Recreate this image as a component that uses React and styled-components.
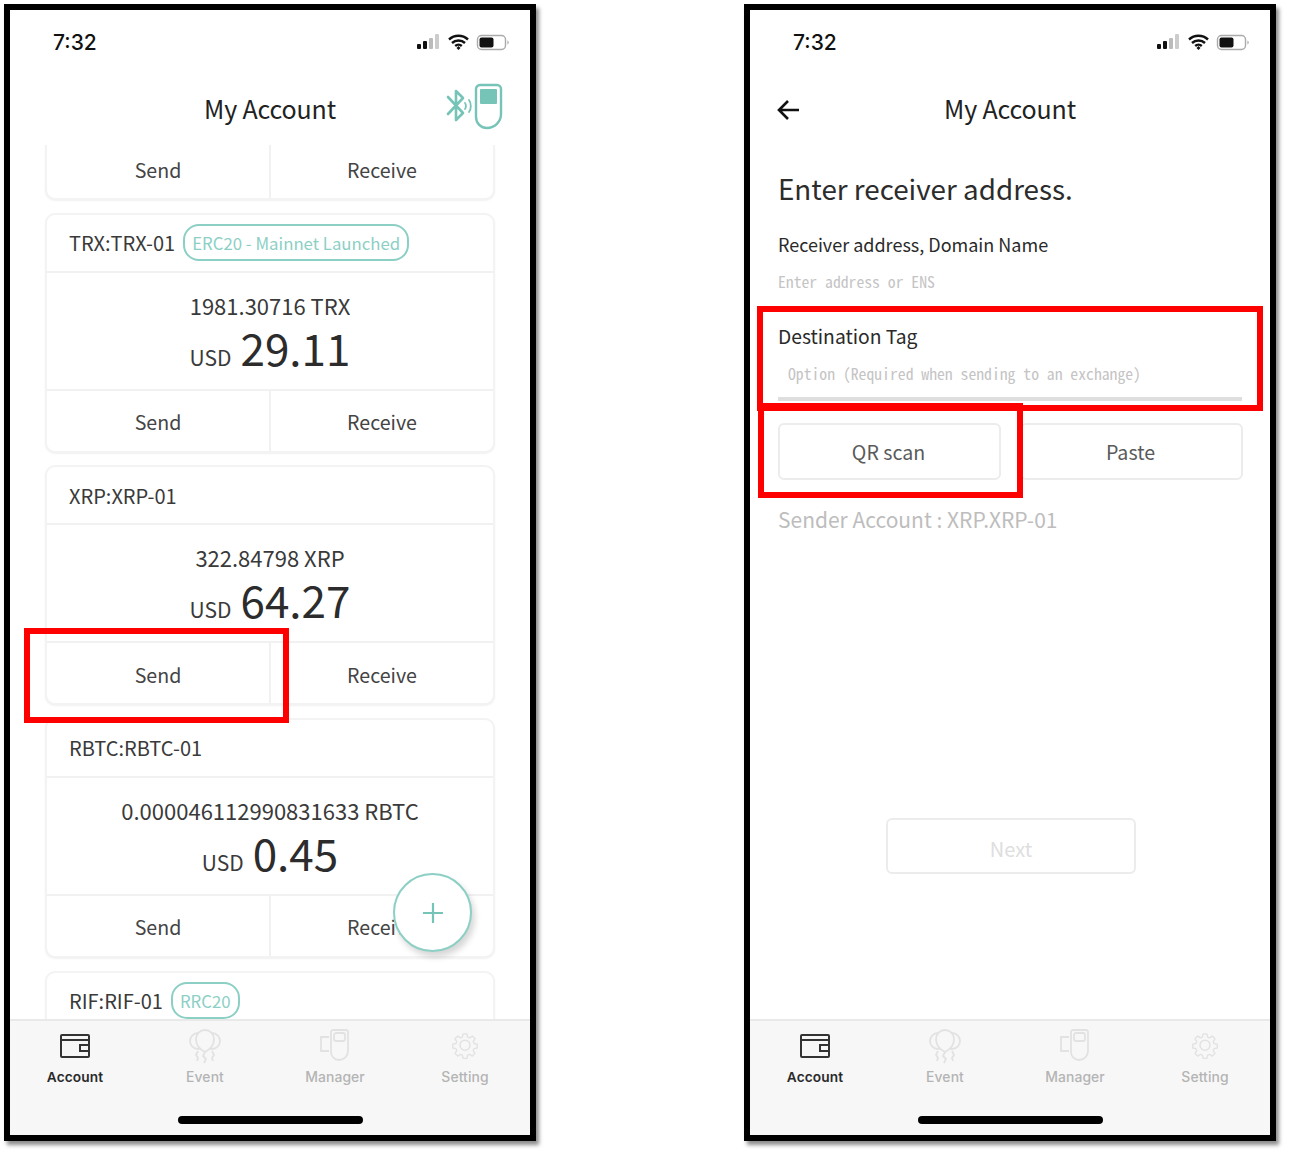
import styled, { createGlobalStyle } from "styled-components";

const TEAL = "#76c4b8";
const KR = `"Noto Sans CJK KR", "Noto Sans", sans-serif`;

const GlobalStyle = createGlobalStyle`
  html, body {
    margin: 0;
    padding: 0;
    background: #fff;
  }
  * { box-sizing: border-box; }
`;

const Page = styled.div`
  width: 1289px;
  height: 1154px;
  padding: 4px;
  display: flex;
  gap: 208px;
  background: #fff;
  font-family: ${KR};
  color: #333;
`;

const Phone = styled.section`
  position: relative;
  width: 532px;
  height: 1137px;
  border: 6px solid #000;
  background: #fff;
  box-shadow: 3px 4px 4px rgba(0, 0, 0, 0.45);
  display: flex;
  flex-direction: column;
  overflow: visible;
`;

const StatusBar = styled.div`
  height: 61px;
  flex: none;
  padding: 3px 19px 0 43px;
  display: flex;
  align-items: center;
  justify-content: space-between;
`;

const Clock = styled.span`
  font-family: Inter, sans-serif;
  font-size: 21px;
  font-weight: 500;
  color: #111;
`;

const Header = styled.header`
  position: relative;
  height: 74px;
  flex: none;
  display: flex;
  align-items: center;
  justify-content: center;
`;

const HeaderTitle = styled.h1`
  margin: 0;
  font-size: 25px;
  font-weight: 400;
  color: #222;
  letter-spacing: -0.15px;
`;

const DeviceSlot = styled.div`
  position: absolute;
  right: 26px;
  top: 12px;
  line-height: 0;
`;

const BackSlot = styled.div`
  position: absolute;
  left: 26px;
  top: 28px;
  line-height: 0;
`;

const AccountList = styled.div`
  flex: 1;
  min-height: 0;
  overflow: hidden;
  padding: 0 35px 0;
  display: flex;
  flex-direction: column;
  gap: 12.67px;
`;

const Card = styled.article`
  flex: none;
  height: ${(p) => (p.$clipped ? "63px" : "240px")};
  margin-top: ${(p) => (p.$clipped ? "-8px" : "0")};
  border: 2px solid #f3f3f3;
  border-radius: 10px;
  background: #fff;
  box-shadow: 0 1px 2px rgba(0, 0, 0, 0.06);
  display: flex;
  flex-direction: column;
`;

const CardHead = styled.div`
  height: 58px;
  flex: none;
  padding: 0 22px;
  display: flex;
  align-items: center;
  gap: 8px;
  border-bottom: 2px solid #f1f1f1;
  font-size: 20px;
  color: #3a3a3a;
`;

const Badge = styled.span`
  height: 37px;
  padding: 0 7px;
  display: flex;
  align-items: center;
  border: 2px solid #8ccfc5;
  border-radius: 16px;
  font-size: 16.8px;
  color: #8ccfc5;
`;

const CardBody = styled.div`
  height: 118px;
  flex: none;
  display: flex;
  flex-direction: column;
  align-items: center;
  padding-top: 17px;
  border-bottom: 2px solid #f1f1f1;
`;

const Amount = styled.div`
  font-size: 22px;
  line-height: 30px;
  color: #3a3a3a;
`;

const Fiat = styled.div`
  display: flex;
  align-items: baseline;
  gap: 9px;
  height: 54px;
  font-size: 21px;
  color: #3a3a3a;
  strong {
    font-size: 44px;
    line-height: 54px;
    font-weight: 400;
    color: #2c2c2c;
  }
`;

const Actions = styled.div`
  flex: 1;
  min-height: 0;
  display: flex;
`;

const Action = styled.div`
  flex: 1;
  display: flex;
  align-items: center;
  justify-content: center;
  padding-top: 2px;
  font-size: 19.6px;
  color: #444;
  & + & {
    border-left: 2px solid #f1f1f1;
  }
`;

const Fab = styled.button`
  position: absolute;
  left: 383px;
  top: 863px;
  width: 79px;
  height: 79px;
  padding: 0;
  border: 2px solid #8ccfc5;
  border-radius: 50%;
  background: #fff;
  box-shadow: 3px 5px 6px rgba(0, 0, 0, 0.16);
  display: flex;
  align-items: center;
  justify-content: center;
`;

const TabBar = styled.nav`
  height: 116px;
  flex: none;
  position: relative;
  background: #f7f7f7;
  border-top: 2px solid #e9e9e9;
  display: grid;
  grid-template-columns: repeat(4, 1fr);
  align-items: start;
  padding-top: 7px;
`;

const TabItem = styled.div`
  display: flex;
  flex-direction: column;
  align-items: center;
  gap: 5px;
  font-family: Inter, sans-serif;
  font-size: ${(p) => (p.$active ? "13.7px" : "13.9px")};
  font-weight: ${(p) => (p.$active ? 600 : 500)};
  letter-spacing: 0.1px;
  color: ${(p) => (p.$active ? "#2a2a2a" : "#b4b4b4")};
  svg {
    display: block;
    height: 36px;
  }
`;

const HomeBar = styled.div`
  position: absolute;
  left: 168px;
  bottom: 11px;
  width: 185px;
  height: 8px;
  border-radius: 4px;
  background: #000;
`;

const Form = styled.div`
  flex: 1;
  min-height: 0;
  padding: 23px 27px 0 28px;
  display: flex;
  flex-direction: column;
`;

const FormTitle = styled.h2`
  margin: 0;
  font-size: 27.8px;
  line-height: 40px;
  font-weight: 400;
  color: #2c2c2c;
`;

const FieldLabel = styled.label`
  display: block;
  margin-top: ${(p) => p.$top}px;
  font-size: ${(p) => p.$size}px;
  line-height: 26px;
  font-weight: 400;
  color: #2a2a2a;
`;

const Placeholder = styled.div`
  margin-top: ${(p) => p.$top}px;
  padding-left: ${(p) => p.$inset}px;
  font-family: "Noto Sans Mono CJK KR", "DejaVu Sans Mono", monospace;
  font-size: 15.7px;
  line-height: 20px;
  color: #c4c4c4;
`;

const Underline = styled.div`
  height: 4px;
  margin-top: 13px;
  margin-right: 1px;
  background: #dedede;
`;

const ButtonRow = styled.div`
  display: flex;
  gap: 19px;
  margin-top: 22px;
`;

const GhostButton = styled.button`
  flex: 1;
  height: 57px;
  padding: 0 2px 0 0;
  border: 2px solid #ececec;
  border-radius: 6px;
  background: #fff;
  font-family: ${KR};
  font-size: 19.6px;
  color: #5a5a5a;
`;

const SenderLine = styled.div`
  margin-top: 24px;
  font-size: 21px;
  line-height: 30px;
  color: #bdbdbd;
`;

const NextButton = styled.button`
  align-self: flex-start;
  width: 250px;
  height: 56px;
  margin: 284px 0 0 108px;
  padding: 4px 0 0;
  border: 2px solid #ececec;
  border-radius: 6px;
  background: #fff;
  font-family: ${KR};
  font-size: 20px;
  color: #dedede;
`;

const RedBox = styled.div`
  position: absolute;
  left: ${(p) => p.$x}px;
  top: ${(p) => p.$y}px;
  width: ${(p) => p.$w}px;
  height: ${(p) => p.$h}px;
  border: 6px solid #f00;
  pointer-events: none;
`;

const SignalIcons = () => (
  <svg width="94" height="20" viewBox="0 0 94 20">
    <rect x="0" y="12" width="4" height="5" rx="1" fill="#111" />
    <rect x="6" y="9" width="4" height="8" rx="1" fill="#111" />
    <rect x="12" y="6" width="4" height="11" rx="1" fill="#bbb" />
    <rect x="18" y="2" width="4" height="15" rx="1" fill="#ccc" />
    <path d="M32 7.5a14 14 0 0 1 19 0M35 11a9.5 9.5 0 0 1 13 0M38.2 14a5 5 0 0 1 6.6 0" fill="none" stroke="#111" strokeWidth="2.4" />
    <path d="M39.5 16l2-2 2 2-2 2z" fill="#111" />
    <rect x="60.5" y="3.5" width="28" height="14" rx="4" fill="none" stroke="#aaa" strokeWidth="1.4" />
    <rect x="62.5" y="5.5" width="14" height="10" rx="2" fill="#111" />
    <path d="M90.5 8.5c1.5.5 1.5 3.500 0 4z" fill="#999" />
  </svg>
);

const DeviceIcon = () => (
  <svg width="58" height="48" viewBox="0 0 58 48" fill="none" stroke={TEAL} strokeLinecap="round" strokeLinejoin="round">
    <path d="M2 14l15 16-7 7V8l7 7-15 16" strokeWidth="2.600" />
    <path d="M19 20c1.200 1.500 1.200 4.500 0 6M23 17c2.400 3 2.400 9 0 12" strokeWidth="1.800" />
    <path d="M30 6a4 4 0 0 1 4-4h17a4 4 0 0 1 4 4v25a14 14 0 0 1-14 14h-0a11 11 0 0 1-11-11z" strokeWidth="2.400" />
    <rect x="34" y="6" width="17" height="15" rx="1" fill={TEAL} stroke="none" />
  </svg>
);

const BackArrow = () => (
  <svg width="24" height="22" viewBox="0 0 24 22" fill="none" stroke="#111" strokeWidth="2.600">
    <path d="M23 11H3M12 2l-9 9 9 9" />
  </svg>
);

const WalletIcon = () => (
  <svg width="32" height="36" viewBox="0 0 32 36" fill="none" stroke="#333" strokeWidth="2">
    <path d="M3 7h26a1 1 0 0 1 1 1v20a1 1 0 0 1-1 1H3a1 1 0 0 1-1-1V8a1 1 0 0 1 1-1zM2 12h28" />
    <path d="M30 17H21v6h9" />
  </svg>
);

const BalloonIcon = () => (
  <svg width="36" height="36" viewBox="0 0 36 36" fill="none" stroke="#e2e2e2" strokeWidth="1.800">
    <circle cx="11" cy="13" r="8" />
    <circle cx="25" cy="13" r="8" />
    <path d="M18 24c-6-3-9-8-9-13 0-5 4-9 9-9s9 4 9 9c0 5-3 10-9 13z" fill="#f7f7f7" />
    <path d="M18 24l-2 4 3 3-2 4M11 23l-2 4 2 3-1 3M25 23l2 4-2 3 1 3" />
  </svg>
);

const ManagerIcon = () => (
  <svg width="30" height="36" viewBox="0 0 30 36" fill="none" stroke="#e2e2e2" strokeWidth="1.800">
    <path d="M9 9H1v14h8" />
    <path d="M11 4a2 2 0 0 1 2-2h13a2 2 0 0 1 2 2v19a9 9 0 0 1-9 9 8 8 0 0 1-8-8z" fill="#f7f7f7" />
    <rect x="14" y="5" width="11" height="8" rx="2" />
  </svg>
);

const GearIcon = () => (
  <svg width="30" height="36" viewBox="0 0 24 24" fill="none" stroke="#e2e2e2" strokeWidth="1.200" strokeLinejoin="round">
    <path d="M10.300 2.500h3.400l.6 2.900 1.700.7 2.500-1.600 2.400 2.400-1.600 2.500.7 1.700 2.900.6v3.400l-2.900.6-.7 1.700 1.600 2.500-2.400 2.400-2.500-1.600-1.700.7-.6 2.900h-3.400l-.6-2.900-1.700-.7-2.500 1.600-2.400-2.400 1.600-2.500-.7-1.700-2.900-.6v-3.400l2.900-.6.7-1.700-1.600-2.500 2.400-2.400 2.500 1.600 1.700-.7z" transform="translate(1.200 0) scale(.9)" />
    <circle cx="12" cy="11.300" r="4" />
  </svg>
);

const tabs = [
  { label: "Account", Icon: WalletIcon, active: true },
  { label: "Event", Icon: BalloonIcon },
  { label: "Manager", Icon: ManagerIcon },
  { label: "Setting", Icon: GearIcon },
];

const accounts = [
  { name: "TRX:TRX-01", badge: "ERC20 - Mainnet Launched", amount: "1981.30716 TRX", usd: "29.11" },
  { name: "XRP:XRP-01", amount: "322.84798 XRP", usd: "64.27" },
  { name: "RBTC:RBTC-01", amount: "0.000046112990831633 RBTC", usd: "0.45" },
  { name: "RIF:RIF-01", badge: "RRC20" },
];

const CardActions = () => (
  <Actions>
    <Action>Send</Action>
    <Action>Receive</Action>
  </Actions>
);

const Tabs = () => (
  <TabBar>
    {tabs.map(({ label, Icon, active }) => (
      <TabItem key={label} $active={active}>
        <Icon />
        {label}
      </TabItem>
    ))}
    <HomeBar />
  </TabBar>
);

const Status = () => (
  <StatusBar>
    <Clock>7:32</Clock>
    <SignalIcons />
  </StatusBar>
);

export default function App() {
  return (
    <Page>
      <GlobalStyle />
      <Phone>
        <Status />
        <Header>
          <HeaderTitle>My Account</HeaderTitle>
          <DeviceSlot>
            <DeviceIcon />
          </DeviceSlot>
        </Header>
        <AccountList>
          <Card $clipped>
            <CardActions />
          </Card>
          {accounts.map((a) => (
            <Card key={a.name}>
              <CardHead>
                {a.name}
                {a.badge && <Badge>{a.badge}</Badge>}
              </CardHead>
              {a.amount && (
                <>
                  <CardBody>
                    <Amount>{a.amount}</Amount>
                    <Fiat>
                      USD <strong>{a.usd}</strong>
                    </Fiat>
                  </CardBody>
                  <CardActions />
                </>
              )}
            </Card>
          ))}
        </AccountList>
        <Fab aria-label="Add account">
          <svg width="24" height="24" viewBox="0 0 24 24" stroke={TEAL} strokeWidth="2.200">
            <path d="M12 2v20M2 12h20" />
          </svg>
        </Fab>
        <Tabs />
        <RedBox $x={14} $y={618} $w={265} $h={95} />
      </Phone>

      <Phone>
        <Status />
        <Header>
          <BackSlot>
            <BackArrow />
          </BackSlot>
          <HeaderTitle>My Account</HeaderTitle>
        </Header>
        <Form>
          <FormTitle>Enter receiver address.</FormTitle>
          <FieldLabel $top={23} $size={18}>Receiver address, Domain Name</FieldLabel>
          <Placeholder $top={15} $inset={0}>Enter address or ENS</Placeholder>
          <FieldLabel $top={31} $size={19.3}>Destination Tag</FieldLabel>
          <Placeholder $top={15} $inset={10}>Option (Required when sending to an exchange)</Placeholder>
          <Underline />
          <ButtonRow>
            <GhostButton>QR scan</GhostButton>
            <GhostButton>Paste</GhostButton>
          </ButtonRow>
          <SenderLine>Sender Account : XRP.XRP-01</SenderLine>
          <NextButton>Next</NextButton>
        </Form>
        <Tabs />
        <RedBox $x={7} $y={296} $w={506} $h={105} />
        <RedBox $x={8} $y={393} $w={265} $h={95} />
      </Phone>
    </Page>
  );
}
